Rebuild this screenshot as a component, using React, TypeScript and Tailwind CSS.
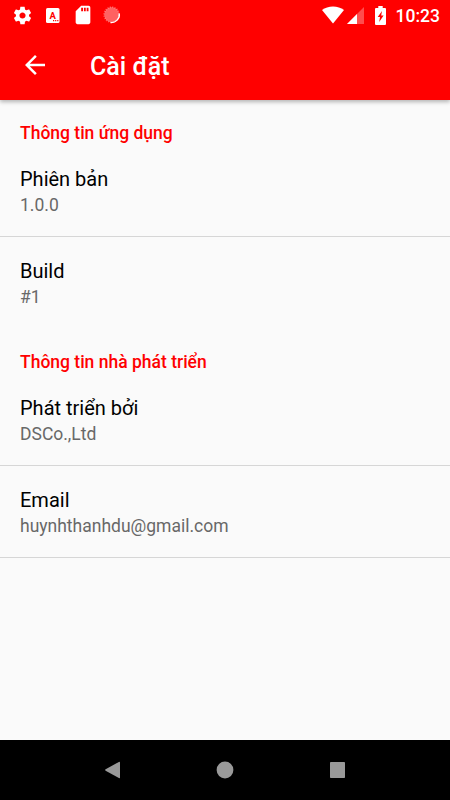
import React from "react";

interface SettingItem {
  title: string;
  value: string;
  divider: boolean;
}

interface SettingSection {
  header: string;
  items: SettingItem[];
}

const sections: SettingSection[] = [
  {
    header: "Thông tin ứng dụng",
    items: [
      { title: "Phiên bản", value: "1.0.0", divider: true },
      { title: "Build", value: "#1", divider: false },
    ],
  },
  {
    header: "Thông tin nhà phát triển",
    items: [
      { title: "Phát triển bởi", value: "DSCo.,Ltd", divider: true },
      { title: "Email", value: "huynhthanhdu@gmail.com", divider: true },
    ],
  },
];

const StatusBar: React.FC = () => (
  <div className="h-[30px] flex items-center justify-between pl-3 pr-[10px] text-white">
    <div className="flex items-center">
      {/* Settings */}
      <svg className="w-[21px] h-[21px]" viewBox="0 0 24 24" fill="currentColor">
        <path d="M19.43 12.98c.04-.32.07-.64.07-.98s-.03-.66-.07-.98l2.11-1.65c.19-.15.24-.42.12-.64l-2-3.46c-.12-.22-.39-.3-.61-.22l-2.49 1c-.52-.4-1.08-.73-1.69-.98l-.38-2.65C14.46 2.18 14.25 2 14 2h-4c-.25 0-.46.18-.49.42l-.38 2.65c-.61.25-1.17.59-1.69.98l-2.49-1c-.23-.09-.49 0-.61.22l-2 3.46c-.13.22-.07.49.12.64l2.11 1.65c-.04.32-.07.65-.07.98s.03.66.07.98l-2.11 1.65c-.19.15-.24.42-.12.64l2 3.46c.12.22.39.3.61.22l2.49-1c.52.4 1.08.73 1.69.98l.38 2.65c.03.24.24.42.49.42h4c.25 0 .46-.18.49-.42l.38-2.65c.61-.25 1.17-.59 1.69-.98l2.49 1c.23.09.49 0 .61-.22l2-3.46c.12-.22.07-.49-.12-.64l-2.11-1.65zM12 15.5c-1.93 0-3.5-1.57-3.5-3.5s1.57-3.5 3.5-3.5 3.5 1.57 3.5 3.5-1.57 3.5-3.5 3.5z" />
      </svg>
      {/* Keyboard */}
      <svg className="w-[14px] h-[15px] ml-[13px]" viewBox="0 0 14 15">
        <rect width="13.5" height="15" rx="1.5" fill="#fff" />
        <text x="6.6" y="10.6" textAnchor="middle" fill="#f00" className="text-[9.5px] font-bold">
          A
        </text>
        <path d="M7 12h1.2v1.2H7zM9.1 12h1.2v1.2H9.1zM11.2 12h1.2v1.2h-1.2z" fill="#f00" />
      </svg>
      {/* SD card */}
      <svg className="w-[22px] h-[22px] ml-[12px]" viewBox="0 0 24 24" fill="currentColor">
        <path d="M18 2h-8L4.02 8 4 20c0 1.1.9 2 2 2h12c1.1 0 2-.9 2-2V4c0-1.1-.9-2-2-2zm-6 6h-2V4h2v4zm3 0h-2V4h2v4zm3 0h-2V4h2v4z" />
      </svg>
      {/* Sync progress */}
      <svg className="w-[18px] h-[18px] ml-[9px]" viewBox="0 0 18 18" fill="none">
        <circle cx="8.7" cy="8.7" r="7.4" fill="#fff" opacity="0.38" />
        <circle cx="8.7" cy="8.7" r="7.6" stroke="#fff" strokeWidth="1.6" strokeDasharray="1.2 1.2" opacity="0.3" />
        <path d="M16.3 7.5A8 8 0 0 1 7.5 16.5" stroke="#fff" strokeWidth="1.3" />
      </svg>
    </div>
    <div className="flex items-center">
      {/* Wifi */}
      <svg className="w-[22px] h-[18px]" viewBox="0 0 22 18" fill="currentColor">
        <path d="M11 17.6 0 4.1C3 1.7 6.9.5 11 .5s8 1.2 11 3.6z" />
      </svg>
      {/* Mobile signal */}
      <svg className="w-[17px] h-[17px] ml-[3px]" viewBox="0 0 17 17" fill="currentColor">
        <path d="M0 17 17 0v17z" opacity="0.3" />
        <path d="M0 17 10 7v10z" />
      </svg>
      {/* Battery */}
      <svg className="w-[11px] h-[19px] ml-[11px]" viewBox="0 0 11 19">
        <path d="M3.3 0h4.4v2H10a1 1 0 0 1 1 1v15a1 1 0 0 1-1 1H1a1 1 0 0 1-1-1V3a1 1 0 0 1 1-1h2.3z" fill="#fff" />
        <path d="M7 5 2.7 11H5l-.8 5 4.400-6.500H6.200z" fill="#f00" />
      </svg>
      <span className="ml-[10px] pt-[2px] text-[17.5px] leading-5 font-medium">10:23</span>
    </div>
  </div>
);

const AppBar: React.FC = () => (
  <div className="h-[70px] flex items-center pl-5 text-white">
    <svg className="w-[30px] h-[30px]" viewBox="0 0 24 24" fill="currentColor">
      <path d="M20 11H7.83l5.59-5.59L12 4l-8 8 8 8 1.41-1.41L7.83 13H20v-2z" />
    </svg>
    <h1 className="ml-10 pt-[3px] text-[25px] leading-[30px] font-medium">Cài đặt</h1>
  </div>
);

const SettingRow: React.FC<SettingItem> = ({ title, value, divider }) => (
  <div className={`h-[92px] px-5 pt-[22px] border-b ${divider ? "border-[#d6d6d6]" : "border-transparent"}`}>
    <div className="text-xl leading-6 text-black">{title}</div>
    <div className="mt-[3px] text-[17.5px] leading-[22px] text-[#686868]">{value}</div>
  </div>
);

const NavigationBar: React.FC = () => (
  <div className="h-[60px] bg-black text-[#999] flex items-center justify-center">
    <svg className="w-[15px] h-[18px]" viewBox="0 0 15 18" fill="currentColor">
      <path d="M13.9.9Q15 .3 15 1.5v15q0 1.2-1.100.6L.6 9.7q-.9-.7 0-1.4z" />
    </svg>
    <svg className="w-[18px] h-[18px] ml-[96px]" viewBox="0 0 18 18" fill="currentColor">
      <circle cx="9" cy="9" r="8.4" />
    </svg>
    <svg className="w-[15px] h-4 ml-[96px]" viewBox="0 0 15 16" fill="currentColor">
      <rect width="15" height="16" rx="0.8" />
    </svg>
  </div>
);

const App: React.FC = () => (
  <div className="w-[450px] h-[800px] flex flex-col overflow-hidden bg-[#fafafa] font-['Roboto',sans-serif]">
    <header className="relative bg-[#ff0000] shadow-[0_2px_4px_rgba(0,0,0,0.28)]">
      <StatusBar />
      <AppBar />
    </header>

    <main className="flex-1">
      {sections.map((section) => (
        <section key={section.header}>
          <h2 className="h-[45px] px-5 pt-[22px] text-[17.5px] leading-[22px] font-medium text-[#ff0000]">{section.header}</h2>
          {section.items.map((item) => (
            <SettingRow key={item.title} {...item} />
          ))}
        </section>
      ))}
    </main>

    <NavigationBar />
  </div>
);

export default App;
